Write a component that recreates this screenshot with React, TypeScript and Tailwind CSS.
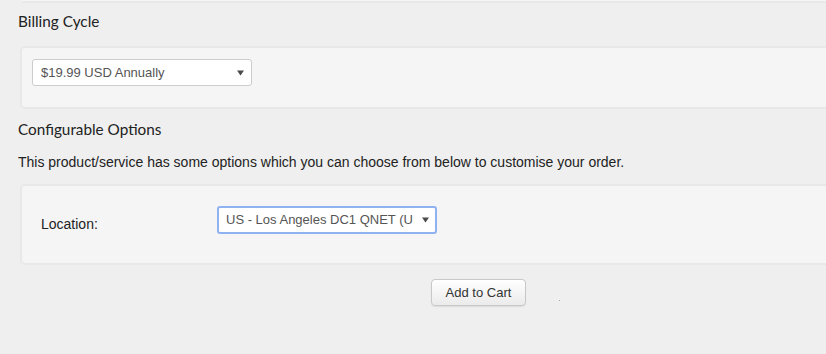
import React from "react";

function Arrow() {
  return (
    <svg width="7" height="6" viewBox="0 0 7 6" className="shrink-0">
      <path d="M0 0.5 L7 0.5 L3.5 5.5 Z" fill="#4a4a4a" />
    </svg>
  );
}

export default function App() {
  return (
    <div className="w-[826px] h-[354px] bg-[#efefef] overflow-hidden font-['Liberation_Sans',Arial,sans-serif] text-[13px] text-[#333]">
      <div className="ml-[22px] w-[900px] h-[3px] bg-[#f5f5f5] border-b-2 border-[#e8e8e8]" />

      <h3 className="ml-[18px] mt-[7px] font-['Lato',sans-serif] text-[15.3px] leading-[22px] text-[#222] font-normal">
        Billing Cycle
      </h3>

      <div className="ml-[20px] mt-[14px] w-[900px] bg-[#f5f5f5] border-2 border-[#e8e8e8] rounded-[5px] pt-[11px] pb-[21px] pl-[10px]">
        <div className="w-[220px] h-[27px] bg-white border border-[#cccccc] rounded-[3px] flex items-center justify-between pl-[8px] pr-[7px] text-[#555] leading-[18px]">
          <span>$19.99 USD Annually</span>
          <Arrow />
        </div>
      </div>

      <h3 className="ml-[18px] mt-[9px] font-['Lato',sans-serif] text-[15.3px] leading-[22px] text-[#222] font-normal">
        Configurable Options
      </h3>

      <p className="ml-[18px] mt-[13px] text-[14px] leading-[18px] text-[#222]">
        This product/service has some options which you can choose from below to customise your order.
      </p>

      <div className="ml-[20px] mt-[13px] w-[900px] bg-[#f5f5f5] border-2 border-[#e8e8e8] rounded-[5px] pt-[20px] pb-[29px] pl-[19px] flex items-start">
        <label className="w-[176px] mt-[8px] text-[14px] leading-[20px] text-[#222]">Location:</label>
        <div className="w-[220px] h-[28px] bg-white border-2 border-[#8fb2f2] rounded-[3px] flex items-center justify-between pl-[7px] pr-[6px] text-[#555] leading-[18px]">
          <span className="whitespace-nowrap">US - Los Angeles DC1 QNET (U</span>
          <Arrow />
        </div>
      </div>

      <div className="flex items-start mt-[14px] ml-[431px]">
        <button className="w-[95px] h-[27px] bg-gradient-to-b from-white to-[#ebebeb] border border-[#c8c8c8] rounded-[4px] shadow-[0_1px_1px_rgba(0,0,0,0.08)] text-[13px] text-[#333] leading-[18px]">
          Add to Cart
        </button>
        <span className="ml-[33px] mt-[21px] w-[1px] h-[1px] bg-[#9aa6bd]" />
      </div>
    </div>
  );
}
